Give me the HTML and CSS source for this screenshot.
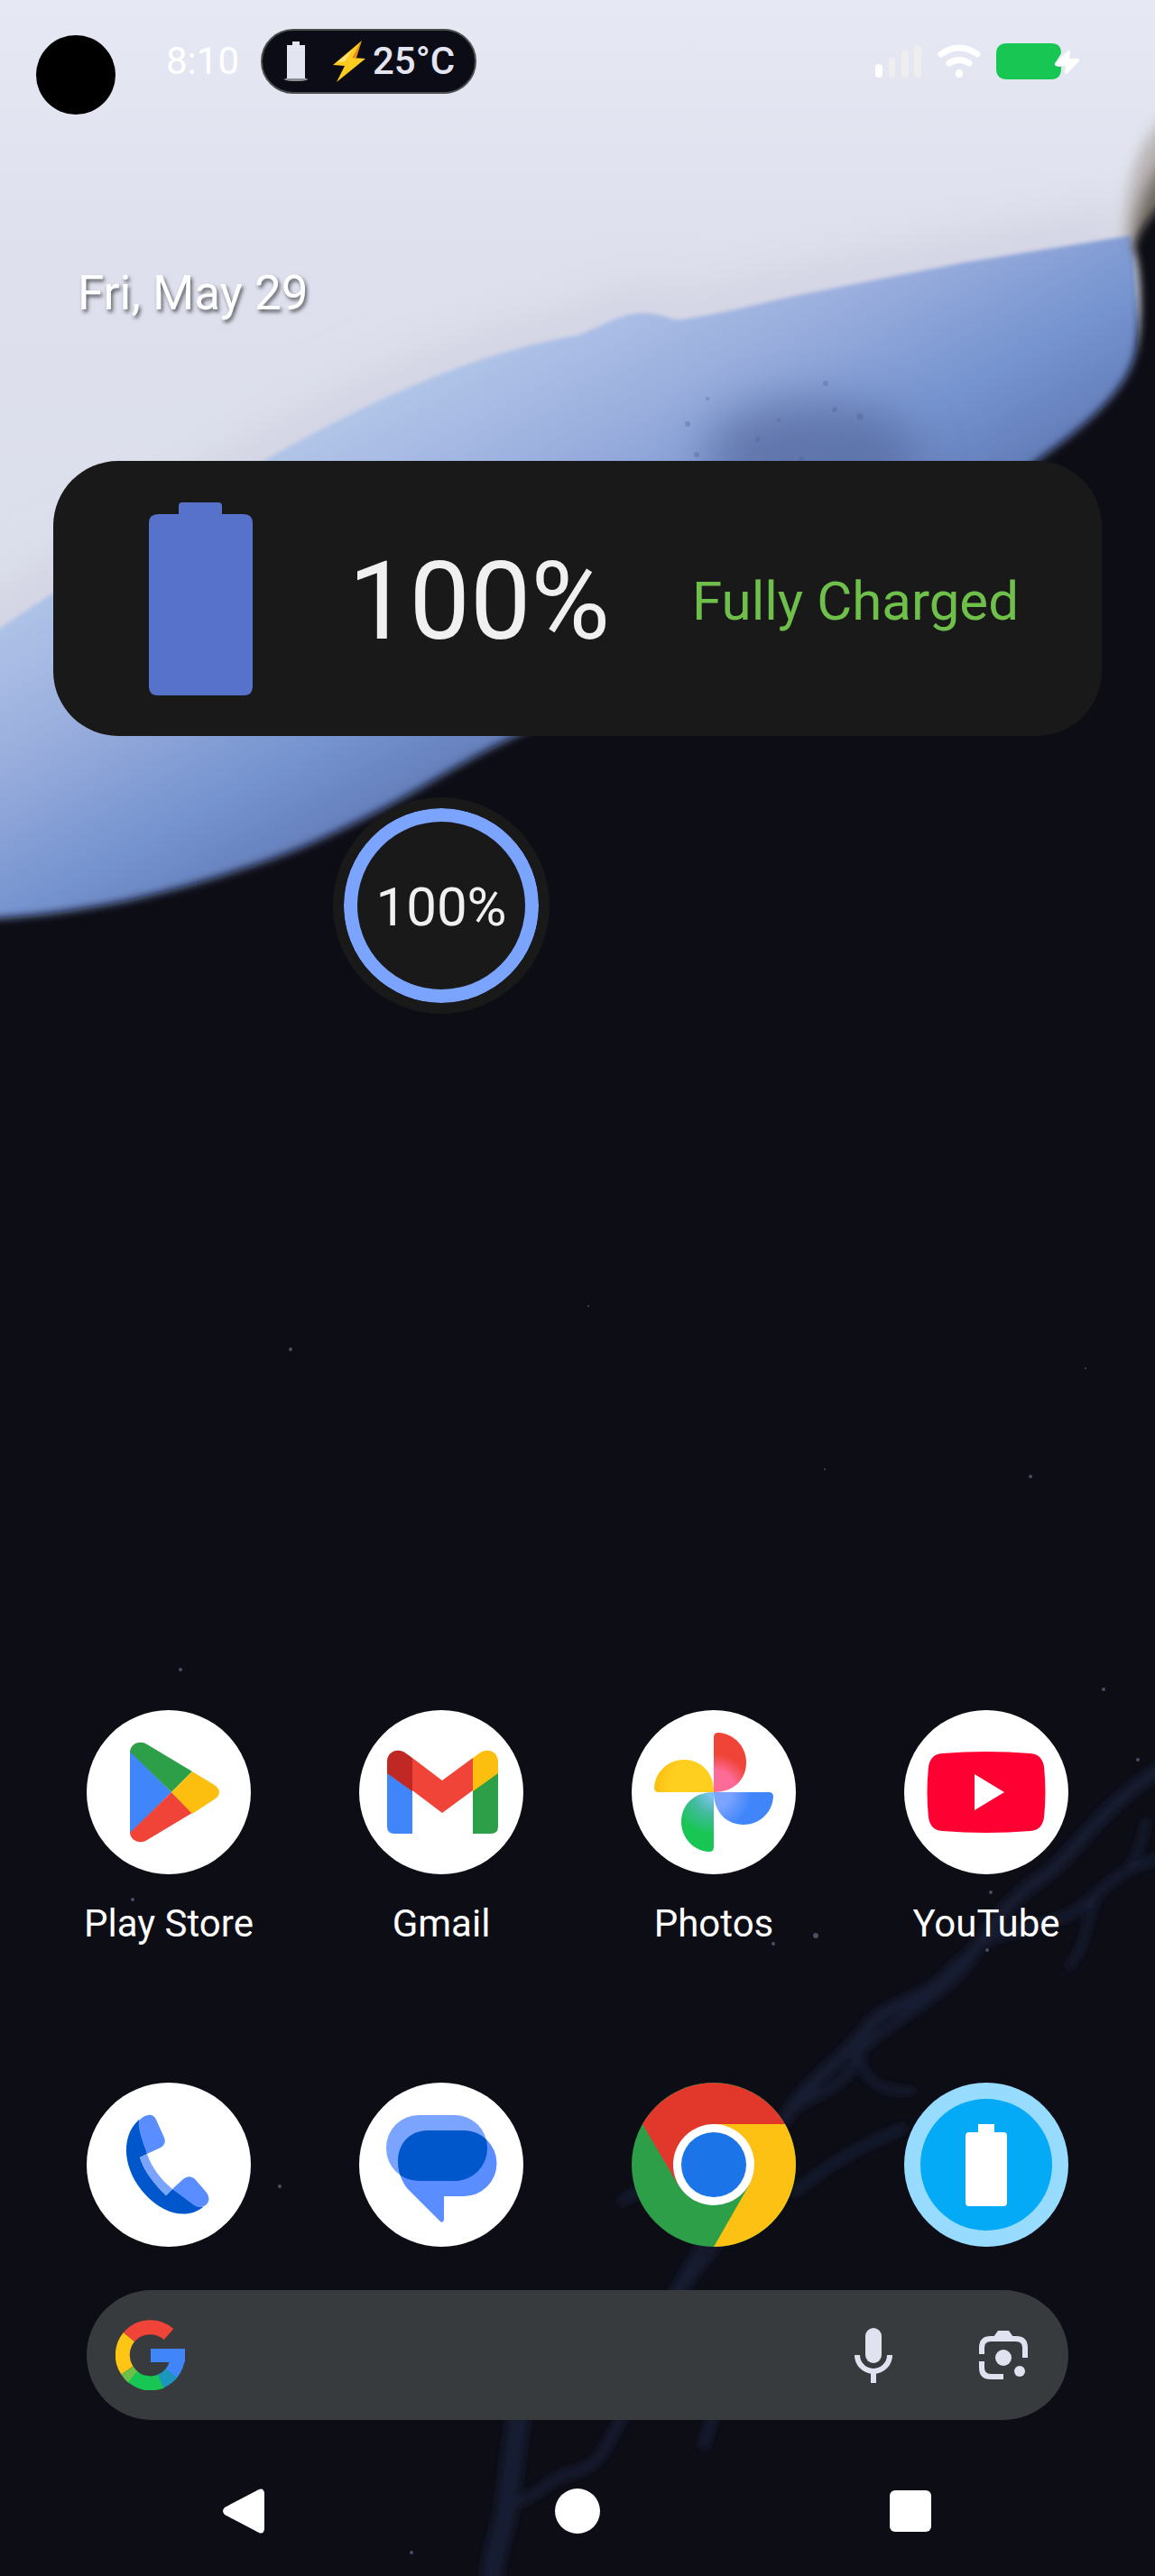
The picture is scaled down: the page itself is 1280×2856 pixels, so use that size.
FILE: index.html
```html
<!DOCTYPE html>
<html lang="en">
<head>
    <meta charset="UTF-8">
    <meta name="viewport" content="width=device-width, initial-scale=1.0">
    <title>Home screen</title>
    <link rel="stylesheet" href="styles.css">
</head>
<body>
    <!-- Wallpaper -->
    <svg class="wallpaper" viewBox="0 0 1280 2856" preserveAspectRatio="xMidYMin slice" aria-hidden="true">
        <defs>
            <linearGradient id="sky" x1="0" y1="0" x2="0" y2="700" gradientUnits="userSpaceOnUse">
                <stop offset="0" stop-color="#e6e8f4"/>
                <stop offset="0.4" stop-color="#dee1ed"/>
                <stop offset="1" stop-color="#dbdfeb"/>
            </linearGradient>
            <linearGradient id="blue" x1="288" y1="522" x2="480" y2="871" gradientUnits="userSpaceOnUse">
                <stop offset="0" stop-color="#b0c4e8"/>
                <stop offset="0.35" stop-color="#9bafde"/>
                <stop offset="0.75" stop-color="#7593cf"/>
                <stop offset="1" stop-color="#647eba"/>
            </linearGradient>
            <filter id="soft2"><feGaussianBlur stdDeviation="2"/></filter>
            <filter id="soft5"><feGaussianBlur stdDeviation="5"/></filter>
            <filter id="soft8" x="-50%" y="-20%" width="200%" height="140%"><feGaussianBlur stdDeviation="8"/></filter>
            <filter id="soft30" x="-50%" y="-50%" width="200%" height="200%"><feGaussianBlur stdDeviation="26"/></filter>
        </defs>
        <rect width="1280" height="1100" fill="url(#sky)"/>
        <path d="M-40 715 C60 655 180 580 292 511 C450 420 560 385 640 372 C670 360 690 347 713 347 C735 347 745 357 758 354 C810 346 850 334 901 324 L1069 291 L1252 261" fill="none" stroke="#d3d3e3" stroke-width="60" filter="url(#soft30)"/>
        <path d="M1330 100 C1260 140 1246 200 1246 275 L1330 330 Z" fill="#b9b4b4" filter="url(#soft8)"/>
        <path d="M-20 710 C60 655 180 580 292 511 C450 420 560 385 640 372 C670 360 690 347 713 347 C735 347 745 357 758 354 C810 346 850 334 901 324 L1069 291 L1254 261 L1290 700 L500 900 L-20 1100 Z" fill="url(#blue)" filter="url(#soft2)"/>
        <ellipse cx="900" cy="505" rx="120" ry="60" fill="#566a9f" opacity="0.75" filter="url(#soft30)"/>
        <g fill="#4d6196" opacity="0.35">
            <circle cx="762" cy="470" r="3"/><circle cx="840" cy="487" r="3"/><circle cx="925" cy="454" r="3"/>
            <circle cx="953" cy="462" r="4"/><circle cx="863" cy="466" r="2"/><circle cx="888" cy="509" r="3"/>
            <circle cx="915" cy="425" r="3"/><circle cx="784" cy="442" r="2"/><circle cx="772" cy="504" r="3"/>
        </g>
        <path d="M1320 150 C1280 180 1262 220 1256 266 L1320 330 Z" fill="#6d6761" filter="url(#soft8)"/>
        <path d="M1320 200 C1284 225 1264 252 1257 274 C1264 300 1266 350 1259 388 C1250 430 1215 464 1142 516 C1060 590 980 630 850 685 C750 725 660 772 563 820 C510 845 465 877 408 905 C335 942 300 955 204 983 C130 1003 60 1016 -40 1020 L-40 2900 L1320 2900 Z" fill="#0d0d17" filter="url(#soft5)"/>
        <g class="tendrils" filter="url(#soft5)">
            <path d="M1290 1958 C1210 2010 1190 2060 1150 2085 C1100 2120 1090 2160 1060 2180 C1030 2220 980 2220 960 2250 C930 2290 890 2310 870 2350" stroke-width="15"/>
            <path d="M1290 2060 C1230 2070 1215 2110 1180 2125 C1110 2150 1090 2140 1075 2175 C1030 2230 960 2250 945 2290 C930 2320 900 2320 870 2345" stroke-width="10"/>
            <path d="M1225 2090 C1200 2120 1210 2150 1185 2180 M1270 2020 C1262 2060 1250 2080 1225 2090 M955 2270 C950 2300 970 2320 1010 2318" stroke-width="8"/>
            <path d="M1000 2360 C950 2380 920 2400 880 2430 M820 2430 C790 2470 770 2500 745 2545 M800 2480 C780 2510 760 2530 740 2560 M690 2440 C720 2420 770 2410 810 2390" stroke-width="10"/>
            <path d="M578 2660 C568 2720 565 2760 560 2790 C550 2830 545 2840 545 2870" stroke-width="24"/>
            <path d="M690 2680 C670 2710 670 2730 640 2740 C610 2745 600 2765 572 2775 M790 2680 L780 2710" stroke-width="11"/>
        </g>
        <g fill="#4a4d63">
            <circle cx="322" cy="1496" r="2"/><circle cx="1142" cy="1637" r="2"/><circle cx="652" cy="1448" r="1"/>
            <circle cx="1203" cy="1517" r="1"/><circle cx="914" cy="1629" r="1"/><circle cx="200" cy="1851" r="2"/>
            <circle cx="147" cy="2106" r="2"/><circle cx="904" cy="2146" r="3"/><circle cx="857" cy="2155" r="2"/>
            <circle cx="1098" cy="2098" r="2"/><circle cx="1094" cy="2162" r="2"/><circle cx="1223" cy="1873" r="2"/>
            <circle cx="310" cy="2424" r="2"/><circle cx="456" cy="2830" r="2"/><circle cx="1261" cy="1951" r="2"/>
        </g>
    </svg>

    <div class="camera"></div>

    <header class="status-bar">
        <span class="time">8:10</span>
        <div class="status-pill">
            <svg width="26" height="44" viewBox="0 0 26 44" aria-hidden="true">
                <ellipse cx="13" cy="42" rx="13" ry="2" fill="#8a8c90"/>
                <path d="M9 0h8v4h6v37H3V4h6z" fill="#e3e5f1"/>
            </svg>
            <svg class="bolt" width="36" height="48" viewBox="0 0 36 48" aria-hidden="true">
                <path d="M32 1 0 28 13 29 4 47 36 21 22 20Z" fill="#ffcb1f"/>
                <path d="M32 1 22 20h4z" fill="#f28c1c"/>
                <path d="M22 11 5 25l8-1z" fill="#ffe680"/>
            </svg>
            <span>25°C</span>
        </div>
        <div class="status-icons">
            <svg width="52" height="40" viewBox="0 0 52 40" role="img" aria-label="Signal">
                <rect x="0" y="23" width="8" height="15" rx="4" fill="#fff"/>
                <g fill="#eeeeef">
                    <rect x="15" y="16" width="7" height="22" rx="3"/>
                    <rect x="29" y="8" width="8" height="30" rx="4"/>
                    <rect x="43" y="2" width="8" height="36" rx="4"/>
                </g>
            </svg>
            <svg width="48" height="40" viewBox="0 0 48 40" role="img" aria-label="Wi-Fi" fill="none" stroke="#fff" stroke-linecap="round">
                <path d="M4 12Q24-2 44 12" stroke-width="7"/>
                <path d="M13 22Q24 15 35 22" stroke-width="7"/>
                <path d="M24 33v1" stroke-width="8"/>
            </svg>
            <svg width="92" height="40" viewBox="0 0 92 40" role="img" aria-label="Battery charging">
                <path d="M12 0h49q11 0 11 11l-6 10q-2 5 4 5h2v2q0 12-11 12H12Q0 40 0 28V12Q0 0 12 0z" fill="#17c653"/>
                <path d="M80 8 65 22q-1 3 2 3h10l-1 8q1 2 3 0l13-13q1-3-2-3h-9l1-8q0-2-2-1z" fill="#fff"/>
            </svg>
        </div>
    </header>

    <main>
        <p class="date">Fri, May 29</p>

        <section class="battery-card">
            <svg width="115" height="214" viewBox="0 0 115 214" aria-hidden="true">
                <path d="M37 0h40q4 0 4 4v9h24q10 0 10 10v181q0 10-10 10H10q-10 0-10-10V23q0-10 10-10h23V4q0-4 4-4z" fill="#5772ca"/>
            </svg>
            <span class="level">100%</span>
            <span class="state">Fully Charged</span>
        </section>

        <section class="battery-ring">100%</section>
    </main>

    <!-- App icons -->
    <nav class="apps">
        <a class="app" href="#">
            <svg class="app-icon" viewBox="0 0 182 182" aria-hidden="true">
                <circle cx="91" cy="91" r="91" fill="#fff"/>
                <path d="M48 45v92l46-46z" fill="#4086fa"/>
                <path d="M48 46C49 37 59 33 67 38l50 30-23 23z" fill="#2d9f49"/>
                <path d="M48 136c1 9 11 13 19 8l50-30-23-23z" fill="#f04438"/>
                <path d="M117 68l23 14q7 4 7 9t-7 9l-23 15-23-24z" fill="#fcbf10"/>
            </svg>
            <span>Play Store</span>
        </a>
        <a class="app" href="#">
            <svg class="app-icon" viewBox="0 0 182 182" aria-hidden="true">
                <circle cx="91" cy="91" r="91" fill="#fff"/>
                <path d="M31 69v60q0 8 8 8h20V89z" fill="#4086fa"/>
                <path d="M154 69v60q0 8-8 8h-20V89z" fill="#2d9f49"/>
                <path d="M59 53 92 78l34-25v36l-34 25-33-25z" fill="#f04438"/>
                <path d="M31 70V57c0-11 12-16 21-9l7 5v37z" fill="#c02923"/>
                <path d="M154 70V57c0-11-12-16-21-9l-7 5v37z" fill="#fcbf10"/>
            </svg>
            <span>Gmail</span>
        </a>
        <a class="app" href="#">
            <svg class="app-icon" viewBox="0 0 182 182" aria-hidden="true">
                <defs>
                    <radialGradient id="petal-red" cx="91" cy="91" r="60" gradientUnits="userSpaceOnUse"><stop offset="0.4" stop-color="#fd6c98"/><stop offset="0.7" stop-color="#f04438"/></radialGradient>
                    <radialGradient id="petal-blue" cx="91" cy="91" r="60" gradientUnits="userSpaceOnUse"><stop offset="0.3" stop-color="#7ba4fe"/><stop offset="0.7" stop-color="#4086fa"/></radialGradient>
                    <radialGradient id="petal-green" cx="91" cy="91" r="60" gradientUnits="userSpaceOnUse"><stop offset="0.1" stop-color="#7cc2ee"/><stop offset="0.4" stop-color="#43bba0"/><stop offset="0.8" stop-color="#17c653"/></radialGradient>
                    <radialGradient id="petal-yellow" cx="91" cy="91" r="66" gradientUnits="userSpaceOnUse"><stop offset="0.75" stop-color="#ffcf20"/><stop offset="1" stop-color="#fcbf10"/></radialGradient>
                </defs>
                <circle cx="91" cy="91" r="91" fill="#fff"/>
                <path d="M91 91V30q0-5 5-5c18 1 31 16 31 33 0 19-14 33-36 33z" fill="url(#petal-red)"/>
                <path d="M91 91h61q5 0 5 5c-1 18-16 31-33 31-19 0-33-14-33-36z" fill="url(#petal-blue)"/>
                <path d="M91 91v61q0 5-5 5c-18-1-31-16-31-33 0-19 14-33 36-33z" fill="url(#petal-green)"/>
                <path d="M91 91H30q-5 0-5-5c1-18 16-31 33-31 19 0 33 14 33 36z" fill="url(#petal-yellow)"/>
            </svg>
            <span>Photos</span>
        </a>
        <a class="app" href="#">
            <svg class="app-icon" viewBox="0 0 182 182" aria-hidden="true">
                <circle cx="91" cy="91" r="91" fill="#fff"/>
                <path d="M42 48q49-4 98 0 13 1 15 15 3 28 0 56-2 14-15 15-49 4-98 0-13-1-15-15-3-28 0-56 2-14 15-15z" fill="#ff0033"/>
                <path d="M78 71v40l33-20z" fill="#fff"/>
            </svg>
            <span>YouTube</span>
        </a>
    </nav>

    <nav class="apps dock">
        <a class="app" href="#" aria-label="Phone">
            <svg class="app-icon" viewBox="0 0 182 182" aria-hidden="true">
                <circle cx="91" cy="91" r="91" fill="#fff"/>
                <path d="M58 41C36 61 41 98 65 124c20 22 47 28 64 14L95 118l-7 7C76 113 64 99 59 83l8-4z" fill="#0057cc"/>
                <path d="M67 79l-8 4c5 16 17 31 29 42l7-7C82 107 72 94 67 79z" fill="#7ba4fe"/>
                <path d="M58 42c8-8 16-8 19-1l9 20q3 7-4 11l-15 7q-11-28-9-37z" fill="#5a8dff"/>
                <path d="M95 118l12-11q7-6 14 1l12 14q5 7 0 13-6 6-14 1z" fill="#5a8dff"/>
            </svg>
        </a>
        <a class="app" href="#" aria-label="Messages">
            <svg class="app-icon" viewBox="0 0 182 182" aria-hidden="true">
                <defs>
                    <clipPath id="bubble"><rect x="30" y="36" width="112" height="73" rx="36"/></clipPath>
                </defs>
                <circle cx="91" cy="91" r="91" fill="#fff"/>
                <rect x="30" y="36" width="112" height="73" rx="36" fill="#7ba4fe"/>
                <path d="M77 53h39a36 36 0 0 1 0 73H94v26q-1 4-4 2L54 118C34 94 41 53 77 53z" fill="#5a8dff"/>
                <path d="M77 53h39a36 36 0 0 1 0 73H94v26q-1 4-4 2L54 118C34 94 41 53 77 53z" fill="#0057cc" clip-path="url(#bubble)"/>
            </svg>
        </a>
        <a class="app" href="#" aria-label="Chrome">
            <svg class="app-icon" viewBox="0 0 182 182" aria-hidden="true">
                <circle cx="91" cy="91" r="91" fill="#2d9f49"/>
                <path d="M12 46a91 91 0 0 1 158 0H91v45l-39 23z" fill="#e2382b"/>
                <path d="M170 46a91 91 0 0 1-79 136l39-68-39-23V46z" fill="#fcc113"/>
                <circle cx="91" cy="91" r="45" fill="#fff"/>
                <circle cx="91" cy="91" r="36" fill="#1b74e8"/>
            </svg>
        </a>
        <a class="app" href="#" aria-label="Battery">
            <svg class="app-icon" viewBox="0 0 182 182" aria-hidden="true">
                <circle cx="91" cy="91" r="91" fill="#97dbfe"/>
                <circle cx="91" cy="91" r="73" fill="#04aaf6"/>
                <path d="M82 46h18v9h10q4 0 4 4v74q0 4-4 4H72q-4 0-4-4V59q0-4 4-4h10z" fill="#fff"/>
            </svg>
        </a>
    </nav>

    <form class="search">
        <svg width="78" height="78" viewBox="0 0 78 78" fill="none" stroke-width="16" aria-hidden="true">
            <path d="M15 19A31 31 0 0 0 13 56" stroke="#fec514"/>
            <path d="M59 16A31 31 0 0 0 15 19" stroke="#f04438"/>
            <path d="M13 56A31 31 0 0 0 20 64" stroke="#6fc04a"/>
            <path d="M19 63A31 31 0 0 0 51 68" stroke="#17c653"/>
            <path d="M50 68A31 31 0 0 0 63 58" stroke="#1b96bd"/>
            <path d="M62 59A31 31 0 0 0 69 40" stroke="#4086fa"/>
            <path d="M39 32h38v15H39z" fill="#4086fa" stroke="none"/>
        </svg>
        <input type="text" aria-label="Search">
        <button type="button" aria-label="Voice search">
            <svg width="64" height="64" viewBox="0 0 64 64" fill="none" stroke="#e0e2ef" stroke-width="6">
                <rect x="23" y="2" width="18" height="39" rx="9" fill="#e0e2ef" stroke="none"/>
                <path d="M14 32a18 18 0 0 0 36 0M32 50v13"/>
            </svg>
        </button>
        <button type="button" aria-label="Search with camera">
            <svg width="64" height="64" viewBox="0 0 64 64" fill="none" stroke="#e0e2ef" stroke-width="6">
                <path d="M8 31V24q0-10 10-10h28q10 0 10 10v11M8 39v7q0 10 10 10h14"/>
                <path d="M21 12l5-7h12l5 7z" fill="#e0e2ef" stroke="none"/>
                <circle cx="32" cy="35" r="9" fill="#e0e2ef" stroke="none"/>
                <circle cx="50" cy="50" r="6" fill="#e0e2ef" stroke="none"/>
            </svg>
        </button>
    </form>

    <footer class="nav-bar">
        <button type="button" aria-label="Back">
            <svg width="50" height="50" viewBox="0 0 50 50"><path d="M41 1 3 21q-4 4 0 8l38 20q5 2 6-4V5q-1-6-6-4z" fill="#fff"/></svg>
        </button>
        <button type="button" aria-label="Home">
            <svg width="50" height="50" viewBox="0 0 50 50"><circle cx="25" cy="25" r="25" fill="#fff"/></svg>
        </button>
        <button type="button" aria-label="Recent apps">
            <svg width="50" height="50" viewBox="0 0 50 50"><rect x="2" y="2" width="46" height="46" rx="6" fill="#fff"/></svg>
        </button>
    </footer>
</body>
</html>
```

FILE: styles.css
```css
* {
    box-sizing: border-box;
}
body {
    position: relative;
    display: flex;
    flex-direction: column;
    min-height: 100vh;
    margin: 0;
    overflow-x: hidden;
    background-color: #0d0d17;
    color: #fff;
    font-family: Roboto, sans-serif;
}
svg {
    display: block;
    flex-shrink: 0;
}
button {
    padding: 0;
    border: none;
    background: none;
    cursor: pointer;
}
.wallpaper {
    position: absolute;
    top: 0;
    left: 0;
    width: 100%;
    height: 100%;
    z-index: -1;
}
.tendrils path {
    fill: none;
    stroke: #161a30;
    stroke-linecap: round;
}

/* Status bar */
.camera {
    position: absolute;
    top: 39px;
    left: 40px;
    width: 88px;
    height: 88px;
    border-radius: 50%;
    background-color: #000;
}
.status-bar {
    display: flex;
    align-items: center;
    gap: 24px;
    height: 136px;
    padding: 0 84px 0 184px;
    font-size: 42px;
    line-height: 48px;
}
.status-pill {
    display: flex;
    align-items: center;
    height: 72px;
    padding: 0 22px 0 24px;
    border: 2px solid #4b504c;
    border-radius: 36px;
    background-color: #0b0c16;
    color: #e3e5f1;
    font-weight: 500;
}
.bolt {
    margin: 0 8px 0 28px;
}
.status-icons {
    display: flex;
    gap: 17px;
    margin-left: auto;
}

/* Widgets */
.date {
    margin: 157px 88px 0 86px;
    font-size: 53px;
    line-height: 64px;
    text-shadow: 2px 3px 4px rgba(0, 0, 0, 0.6);
}
.battery-card {
    display: flex;
    align-items: center;
    margin: 154px 59px 0;
    height: 305px;
    padding: 0 92px 0 106px;
    border-radius: 72px;
    background-color: #191919;
    white-space: nowrap;
}
.level,
.state {
    padding-top: 6px;
}
.level {
    margin-left: 106px;
    color: #f0f0f0;
    font-size: 120px;
    line-height: 144px;
}
.state {
    margin-left: auto;
    color: #6fc04a;
    font-size: 60px;
    line-height: 72px;
}
.battery-ring {
    display: flex;
    align-items: center;
    justify-content: center;
    width: 216px;
    height: 216px;
    margin: 80px 0 0 381px;
    padding-top: 4px;
    border: 15px solid #7ba4fe;
    border-radius: 50%;
    outline: 12px solid #191919;
    background-color: #191919;
    color: #f0f0f0;
    font-size: 60px;
    line-height: 72px;
}

/* App rows */
.apps {
    display: flex;
    justify-content: space-between;
    margin: auto 96px 0;
}
.dock {
    margin-top: 152px;
}
.app {
    display: flex;
    flex-direction: column;
    align-items: center;
    gap: 31px;
    width: 182px;
    color: #fff;
    font-size: 42px;
    line-height: 48px;
    text-decoration: none;
    white-space: nowrap;
}
.app-icon {
    width: 182px;
    height: 182px;
}

.search {
    display: flex;
    align-items: center;
    gap: 80px;
    height: 144px;
    margin: 48px 96px 0;
    padding: 0 40px 0 32px;
    border-radius: 72px;
    background-color: #383b3e;
}
.search input {
    flex: 1;
    min-width: 0;
    border: none;
    outline: none;
    background: none;
    color: #e0e2ef;
    font: 42px Roboto, sans-serif;
}

.nav-bar {
    display: grid;
    grid-template-columns: repeat(3, 1fr);
    justify-items: center;
    margin: 76px 87px 47px;
}
```
